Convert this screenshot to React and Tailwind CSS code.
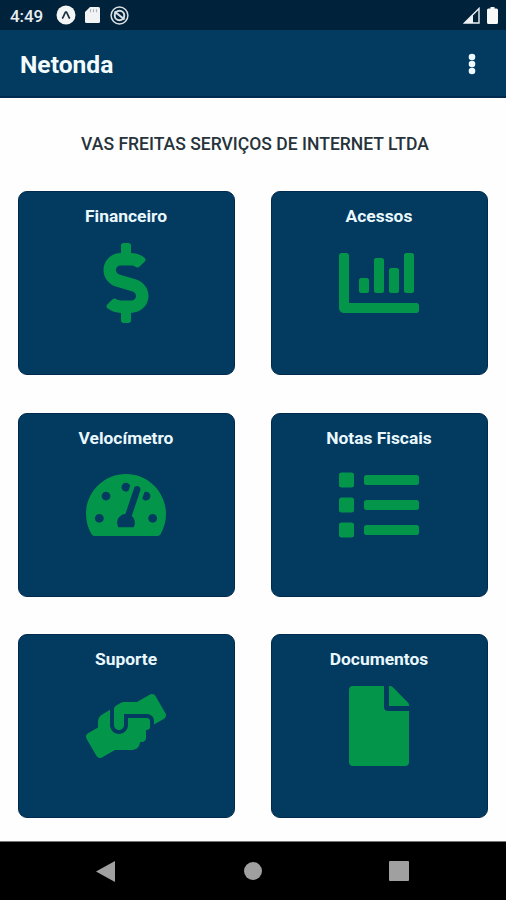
import { FaChartBar, FaDollarSign, FaFile, FaHandsHelping, FaList, FaTachometerAlt } from "react-icons/fa";

const menuItems = [
  { title: "Financeiro", Icon: FaDollarSign },
  { title: "Acessos",    Icon: FaChartBar },
  { title: "Velocímetro", Icon: FaTachometerAlt },
  { title: "Notas Fiscais", Icon: FaList },
  { title: "Suporte",    Icon: FaHandsHelping },
  { title: "Documentos", Icon: FaFile },
];

function StatusBar() {
  return (
    <div className="flex h-[30px] items-center bg-[#00223b] pl-[10px] pr-[8px] text-[#e8eef2]">
      <span className="w-[46px] pt-[2px] text-[17px] font-medium leading-none tracking-[-0.1px]">4:49</span>

      <svg className="h-[20px] w-[20px]" viewBox="0 0 20 20">
        <circle cx="10" cy="10" r="9.5" fill="#f4f6f6" />
        <path d="M6.2 13.5c1.800-1.800 2.500-6.500 3.800-6.500s2 4.700 3.800 6.500" fill="none" stroke="#1c3345" strokeWidth="1.8" />
      </svg>
      <svg className="ml-[9px] h-[16px] w-[15px]" viewBox="0 0 15 16">
        <path d="M5 0h8.500q1.500 0 1.500 1.500v13q0 1.500-1.500 1.500h-12Q0 16 0 14.500V5z" fill="#f1f3f4" />
        <path d="M5.500 2.200v3M8.500 2.200v3M11.500 2.200v3" stroke="#a5b2bb" strokeWidth="1.100" />
      </svg>
      <svg className="ml-[10px] h-[19px] w-[19px]" viewBox="0 0 19 19" fill="none" stroke="#d9e0e4">
        <circle cx="9.500" cy="9.500" r="8.400" strokeWidth="1.500" />
        <circle cx="9.500" cy="9.500" r="4.800" strokeWidth="2" />
        <path d="M4.500 5.500l10 8" strokeWidth="2.200" />
      </svg>

      <svg className="ml-auto h-[17px] w-[17px]" viewBox="0 0 17 17">
        <path d="M1.500 16L16 1.500V16z" fill="#00223b" stroke="#eef1f3" strokeWidth="1.400" />
        <path d="M1.500 16L10 7.500V16z" fill="#eef1f3" />
      </svg>
      <svg className="ml-[7px] h-[17px] w-[11px]" viewBox="0 0 11 17">
        <path d="M3.500 0h4v1.500H9.500q1.500 0 1.500 1.500v12.500q0 1.500-1.500 1.500h-8Q0 17 0 15.500V3q0-1.500 1.500-1.500h2z" fill="#f8fafa" />
      </svg>
    </div>
  );
}

function Header() {
  return (
    <header className="flex h-[68px] items-center justify-between border-b-2 border-[#002b50] bg-[#023a60] pl-[20px] pr-[30px]">
      <h1 className="pt-[4px] text-[24.6px] font-bold leading-none text-[#f3fbfd]">Netonda</h1>
      <svg className="mt-[2px] h-[22px] w-[8px]" viewBox="0 0 8 22" fill="#eefaff">
        <circle cx="4" cy="4" r="3.300" />
        <circle cx="4" cy="11" r="3.300" />
        <circle cx="4" cy="18" r="3.300" />
      </svg>
    </header>
  );
}

function MenuCard({ title, Icon }) {
  return (
    <button type="button" className="flex h-[184px] flex-col items-center rounded-[9px] border border-[#012a4f] bg-[#023a60] pr-[1px] pt-[13px]">
      <span className="text-[17.4px] font-bold leading-[22px] text-[#eaf8fd]">{title}</span>
      <Icon size={80} className="mt-[16px] text-[#03964a]" />
    </button>
  );
}

function NavBar() {
  return (
    <nav className="flex h-[59px] items-center justify-between border-t border-[#777777] bg-black pl-[96px] pr-[97px]">
      <svg className="h-[21px] w-[19px]" viewBox="0 0 19 21" fill="#a0a0a0"><path d="M0 10.500L19 0v21z" /></svg>
      <span className="ml-[2px] h-[18px] w-[18px] rounded-full bg-[#a0a0a0]" />
      <span className="h-[20px] w-[20px] rounded-[1px] bg-[#a0a0a0]" />
    </nav>
  );
}

export default function App() {
  return (
    <div className="flex h-[900px] w-[506px] flex-col overflow-hidden bg-[#fefefe] font-['Roboto',sans-serif]">
      <StatusBar />
      <Header />
      <main className="flex-1 px-[18px]">
        <h2 className="flex h-[93px] items-center justify-center whitespace-nowrap pl-[4px] text-[17.55px] font-medium text-[#27333b]">
          VAS FREITAS SERVIÇOS DE INTERNET LTDA
        </h2>
        <div className="grid grid-cols-2 gap-x-[36px] gap-y-[37.500px]">
          {menuItems.map((item) => (
            <MenuCard key={item.title} title={item.title} Icon={item.Icon} />
          ))}
        </div>
      </main>
      <NavBar />
    </div>
  );
}
